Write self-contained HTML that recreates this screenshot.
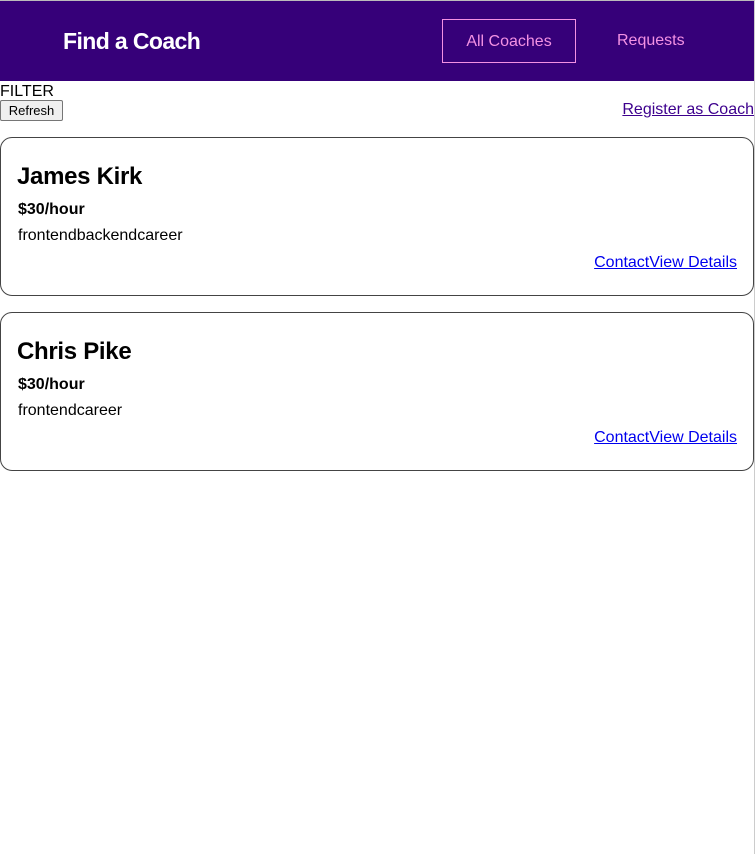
<!DOCTYPE html>
<html><head><style>
body{margin:0;font-family:"Liberation Sans",Arial,sans-serif;background:#fff;width:756px;height:854px;overflow:hidden;position:relative}
.wrap{position:absolute;left:0;top:0;width:754px;height:854px;border-right:1px solid #ccc}
header{position:absolute;left:0;top:0;width:754px;height:80px;background:#360079;border-top:1px solid #bbb}
header h1{position:absolute;left:63px;top:27px;margin:0;font-size:23px;color:#fff;font-weight:bold;letter-spacing:-0.6px}
.nav1{position:absolute;left:442px;top:18px;width:132px;height:42px;border:1px solid #f391e3;color:#f391e3;font-size:16px;text-align:center;line-height:44px}
.nav2{position:absolute;left:617px;top:18px;line-height:44px;color:#f391e3;font-size:16px}
.filter{position:absolute;left:0;top:83px;font-size:16px;color:#000}
.btn{position:absolute;left:0;top:100px;width:61px;height:19px;border:1px solid #767676;border-radius:2px;background:#efefef;font-size:13px;line-height:19px;text-align:center}
.reg{position:absolute;right:0;top:101px;font-size:16px;color:#3d008d;text-decoration:underline}
.card{position:absolute;left:0;width:752px;height:157px;border:1px solid #444;border-radius:12px}
.card h2{position:absolute;left:16px;top:25px;margin:0;font-size:24px;font-weight:bold;letter-spacing:-0.3px}
.card .p{position:absolute;left:17px;top:63px;font-size:16px;font-weight:bold}
.card .a{position:absolute;left:17px;top:89px;font-size:16px}
.card .l{position:absolute;right:16px;top:116px;font-size:16px;color:#00e;text-decoration:underline}
</style></head><body><div class="wrap">
<header><h1>Find a Coach</h1><div class="nav1">All Coaches</div><div class="nav2">Requests</div></header>
<div class="filter">FILTER</div>
<div class="btn">Refresh</div>
<div class="reg">Register as Coach</div>
<div class="card" style="top:137px"><h2>James Kirk</h2><div class="p">$30/hour</div><div class="a">frontendbackendcareer</div><div class="l">ContactView Details</div></div>
<div class="card" style="top:312px"><h2>Chris Pike</h2><div class="p">$30/hour</div><div class="a">frontendcareer</div><div class="l">ContactView Details</div></div>
</div></body></html>
